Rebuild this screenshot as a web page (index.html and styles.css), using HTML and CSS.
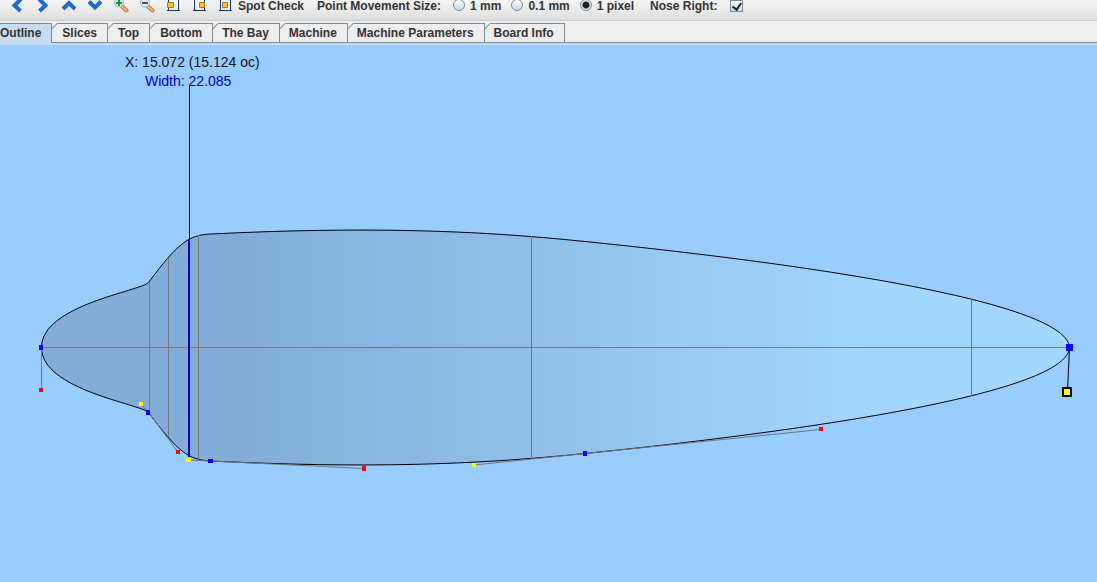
FILE: index.html
```html
<!DOCTYPE html>
<html lang="en">
<head>
<meta charset="utf-8">
<title>Board Designer</title>
<link rel="stylesheet" href="styles.css">
</head>
<body>
<header class="toolbar">
  <div class="tools">
    <button class="tool" aria-label="Move left"><svg viewBox="0 0 16 16"><path class="arrow" d="M12 -1 5.500 5.500 11.500 11"/></svg></button>
    <button class="tool" aria-label="Move right"><svg viewBox="0 0 16 16"><path class="arrow" d="M4 -1 10.500 5.500 4.500 11"/></svg></button>
    <button class="tool" aria-label="Move up"><svg viewBox="0 0 16 16"><path class="arrow" d="M2 9 8 3 14 9"/></svg></button>
    <button class="tool" aria-label="Move down"><svg viewBox="0 0 16 16"><path class="arrow" d="M2 1.500 8 7.500 14 1.500"/></svg></button>
    <button class="tool" aria-label="Zoom in"><svg viewBox="0 0 16 16"><path class="handle-edge" d="M9 6.500 13.500 10.500"/><path class="handle" d="M9 6.500 13.500 10.500"/><circle class="lens" cx="6" cy="2.500" r="4.500"/><path class="plus" d="M3 3h6M6 0v6"/></svg></button>
    <button class="tool" aria-label="Zoom out"><svg viewBox="0 0 16 16"><path class="handle-edge" d="M9 6.500 13.500 10.500"/><path class="handle" d="M9 6.500 13.500 10.500"/><circle class="lens" cx="6" cy="2.500" r="4.500"/><path class="minus" d="M3 3h6"/></svg></button>
    <button class="tool" aria-label="Align left"><svg viewBox="0 0 16 16"><path class="frame" d="M3.500 0v11M13.500 0v11M2 10.500h13"/><path class="block" d="M2.500 2.500h6v5h-6z"/></svg></button>
    <button class="tool" aria-label="Align right"><svg viewBox="0 0 16 16"><path class="frame" d="M3.500 0v11M13.500 0v11M2 10.500h13"/><path class="block" d="M8.500 2.500h5v5h-5z"/></svg></button>
    <button class="tool" aria-label="Align center"><svg viewBox="0 0 16 16"><path class="frame" d="M3.500 0v11M13.500 0v11M2 10.500h13"/><path class="block" d="M5.500 2.500h5v5h-5z"/></svg></button>
  </div>
  <button class="text-tool">Spot Check</button>
  <div class="sizes" role="radiogroup" aria-labelledby="step-caption">
    <span class="caption" id="step-caption">Point Movement Size:</span>
    <label class="option"><input class="radio" type="radio" name="step">1 mm</label>
    <label class="option"><input class="radio" type="radio" name="step">0.1 mm</label>
    <label class="option"><input class="radio" type="radio" name="step" checked>1 pixel</label>
  </div>
  <label class="nose">Nose Right:<input class="check" type="checkbox" checked></label>
</header>
<nav class="tabs" role="tablist">
  <button class="tab selected" role="tab" aria-selected="true">Outline</button>
  <button class="tab" role="tab">Slices</button>
  <button class="tab" role="tab">Top</button>
  <button class="tab" role="tab">Bottom</button>
  <button class="tab" role="tab">The Bay</button>
  <button class="tab" role="tab">Machine</button>
  <button class="tab" role="tab">Machine Parameters</button>
  <button class="tab" role="tab">Board Info</button>
</nav>
<main class="stage">
  <svg class="drawing" viewBox="0 45 1097 537" preserveAspectRatio="xMinYMin meet" role="img" aria-label="Board outline">
    <defs>
      <linearGradient id="deck" gradientUnits="userSpaceOnUse" x1="41" y1="0" x2="1069" y2="0">
        <stop offset="0" stop-color="#82add9"/>
        <stop offset=".2" stop-color="#82add9"/>
        <stop offset=".82" stop-color="#a2d7ff"/>
        <stop offset="1" stop-color="#a2d7ff"/>
      </linearGradient>
    </defs>
    <path class="board" fill="url(#deck)" d="M41.500 347.500C41.500 390 141 404 148.500 412.500C178 452 188.500 460 210.500 461C364 468.500 474 465 585 453.500C821 429.500 1067 392 1069.500 347.500C1067 303 821 265.500 585 241.500C474 230 364 226.500 210.500 234C188.500 235 178 243 148.500 282.500C141 291 41.500 305 41.500 347.500Z"/>
    <path class="guide" d="M41 347.500H1069M149.500 282V413M168.500 258V437M198.500 235V460M531.500 236V459M971.500 299V396"/>
    <path class="guide" d="M41.500 347V390M141 404 148.500 412.500 178 452M188.500 460 210.500 461 364 468.500M474 465 585 453.500 821 429.500"/>
    <path class="cursor" d="M189.500 86V239"/>
    <path class="width" d="M189 239V457"/>
    <path class="active" d="M1069.500 347 1067.500 392"/>
    <g class="anchor"><path d="M39 345h4v5h-4zM146 410h4v5h-4zM208 459h5v4h-5zM583 451h4v5h-4zM1066 344h7v7h-7z"/></g>
    <g class="out"><path d="M39 388h4v4h-4zM176 450h4v4h-4zM362 466h4v5h-4zM819 427h4v4h-4z"/></g>
    <g class="in"><path d="M139 402h4v4h-4zM186 458h5v4h-5zM472 463h4v4h-4z"/></g>
    <rect class="picked" x="1063" y="388" width="8" height="8"/>
    <text class="readout" x="125" y="67">X: 15.072 (15.124 oc)</text>
    <text class="readout readout-width" x="145" y="86">Width: 22.085</text>
  </svg>
</main>
</body>
</html>
```
FILE: styles.css
```css
* { box-sizing: border-box; }
body {
  margin: 0;
  min-height: 100vh;
  display: flex;
  flex-direction: column;
  overflow: hidden;
  background: #99ccff;
  color: #333;
  font: bold 12px/14px "Liberation Sans", Arial, sans-serif;
}
button, input { font: inherit; color: inherit; }
.toolbar {
  display: flex;
  align-items: flex-start;
  height: 21px;
  padding-left: 9px;
  white-space: nowrap;
  background: linear-gradient(#f5f5f5, #dedede);
  border-bottom: 1px solid #ccc;
}
.tools { display: flex; gap: 10px; }
.tool { width: 16px; height: 16px; padding: 0; border: 0; background: none; }
.tool svg { display: block; width: 16px; height: 16px; fill: none; }
.arrow { stroke: #1b6bd0; stroke-width: 4; }
.handle-edge { stroke: #b9764a; stroke-width: 4; stroke-linecap: round; }
.handle { stroke: #f5b679; stroke-width: 2; stroke-linecap: round; }
.lens { fill: #dcebf5; stroke: #9db0bd; }
.plus { stroke: #159a22; stroke-width: 2; }
.minus { stroke: #3c5876; stroke-width: 2; }
.frame { stroke: #17347c; }
.block { fill: #f8c421; stroke: #b27a08; }
.text-tool { margin-left: 5px; padding: 0; border: 0; background: none; line-height: 13px; }
.sizes { display: flex; gap: 10px; margin-left: 13px; line-height: 13px; }
.caption { margin-right: 2px; }
.option { display: flex; gap: 5px; }
.radio, .check { appearance: none; margin: 0; border: 1px solid #7a8a99; background: linear-gradient(#fff, #c4d7e8); }
.radio { width: 12px; height: 12px; margin-top: -1px; border-radius: 50%; }
.radio:checked { background: radial-gradient(circle, #222 0 3px, #dce8f2 4px); }
.nose { display: flex; gap: 13px; margin-left: 16px; line-height: 13px; }
.check { display: grid; place-items: center; width: 13px; height: 12px; }
.check:checked::before {
  content: "";
  width: 4px;
  height: 7px;
  margin-bottom: 2px;
  border: solid #222;
  border-width: 0 2px 2px 0;
  transform: rotate(35deg);
}
.tabs {
  display: flex;
  height: 22px;
  padding-top: 2px;
  background: #eee;
  border-bottom: 1px solid #7a8a99;
}
.tab {
  position: relative;
  height: 19px;
  padding: 0 10px;
  border: 1px solid #7a8a99;
  border-width: 1px 1px 0 0;
  background: #eee;
  white-space: nowrap;
}
.tab:nth-child(n+5) { padding-left: 9px; }
.tab:not(.selected)::before {
  content: "";
  position: absolute;
  top: -1px;
  left: 0;
  width: 6px;
  height: 6px;
  background: linear-gradient(135deg, #eee 3px, #7a8a99 4px, #eee 5px);
}
.selected { height: 20px; padding: 0 10px 1px 0; background: #c8ddf2; }
.stage { flex: 1; border-top: 2px solid #c8ddf2; }
.drawing { display: block; width: 100%; }
.board { stroke: #000; }
.guide { fill: none; stroke: #777; }
.cursor, .active { fill: none; stroke: #000; }
.width { stroke: #0000c0; stroke-width: 2; }
.anchor { fill: #00f; }
.out { fill: #f00; }
.in { fill: #ff0; }
.picked { fill: #ff0; stroke: #000; stroke-width: 2; }
.readout { font: 14px "Liberation Sans", Arial, sans-serif; fill: #111; }
.readout-width { fill: #00c; }
```
